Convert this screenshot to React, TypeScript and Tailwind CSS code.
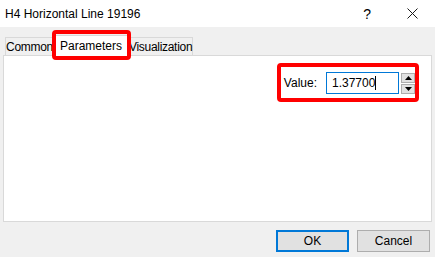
import { useState } from "react";

const tabs = [
    { label: "Common", w: "w-[49px]" },
    { label: "Parameters", w: "w-[74px]" },
    { label: "Visualization", w: "w-[65px]" },
];

function CloseIcon() {
    return (
        <svg width="11" height="11" viewBox="0 0 11 11" className="block">
            <path d="M0.5 0.5 L10.5 10.5 M10.5 0.5 L0.5 10.5" stroke="#1a1a1a" strokeWidth="1" fill="none" />
        </svg>
    );
}

function Spinner() {
    return (
        <div className="flex flex-col w-[14px] h-[21px] ml-[2px] gap-px">
            <div className="flex-1 flex items-center justify-center bg-[#e1e1e1] border border-[#adadad]">
                <svg width="7" height="4" viewBox="0 0 7 4"><path d="M3.5 0 L7 4 L0 4 Z" fill="#000" /></svg>
            </div>
            <div className="flex-1 flex items-center justify-center bg-[#e1e1e1] border border-[#adadad]">
                <svg width="7" height="4" viewBox="0 0 7 4"><path d="M0 0 L7 0 L3.5 4 Z" fill="#000" /></svg>
            </div>
        </div>
    );
}

export default function App() {
    const [active, setActive] = useState(1);
    const [value] = useState("1.37700");

    return (
        <div className="relative w-[435px] h-[257px] overflow-hidden bg-[#f0f0f0] text-[11px] text-black font-['Liberation_Sans',Arial,sans-serif] flex flex-col">
            {/* title bar */}
            <div className="h-[27px] bg-white flex items-center pl-[5px] shrink-0">
                <span className="text-[12px]">H4 Horizontal Line 19196</span>
                <span className="ml-auto mr-[36px] text-[14px] leading-none">?</span>
                <span className="mr-[17px]"><CloseIcon /></span>
            </div>

            {/* tabs */}
            <div className="flex items-end h-[28px] pl-[5px] shrink-0 relative z-10">
                {tabs.map((t, i) =>
                    i === active ? (
                        <button
                            key={t.label}
                            onClick={() => setActive(i)}
                            className={`${t.w} h-[21px] bg-white border border-b-0 border-[#d9d9d9] relative z-10 -mb-px text-[12px]`}
                        >
                            {t.label}
                        </button>
                    ) : (
                        <button
                            key={t.label}
                            onClick={() => setActive(i)}
                            className={`${t.w} h-[18px] bg-[#f0f0f0] border border-b-0 border-[#d9d9d9] leading-[16px] text-[12px] tracking-[-0.3px]`}
                        >
                            {t.label}
                        </button>
                    )
                )}
            </div>

            {/* panel */}
            <div className="mx-[3px] h-[167px] bg-white border border-[#d9d9d9] shrink-0 flex justify-end items-start pt-[16px] pr-[16px]">
                <div className="flex items-center text-[12px]">
                    <span className="mr-[9px]">Value:</span>
                    <div className="w-[73px] h-[22px] border border-[#0078d7] flex items-center pl-[5px]">
                        <span>{value}</span>
                        <span className="w-px h-[14px] bg-black" />
                    </div>
                    <Spinner />
                </div>
            </div>

            {/* buttons */}
            <div className="flex justify-end gap-[8px] pr-[5px] pt-[8px] text-[12px]">
                <button className="w-[73px] h-[22px] bg-[#e1e1e1] border-2 border-[#0078d7]">OK</button>
                <button className="w-[73px] h-[22px] bg-[#e1e1e1] border border-[#adadad]">Cancel</button>
            </div>

            {/* red annotation boxes */}
            <div className="absolute left-[52px] top-[30px] w-[79px] h-[30px] border-[4px] border-[#ff0000] rounded-[4px] z-20 pointer-events-none" />
            <div className="absolute left-[277px] top-[63px] w-[142px] h-[39px] border-[4px] border-[#ff0000] rounded-[4px] z-20 pointer-events-none" />
        </div>
    );
}
